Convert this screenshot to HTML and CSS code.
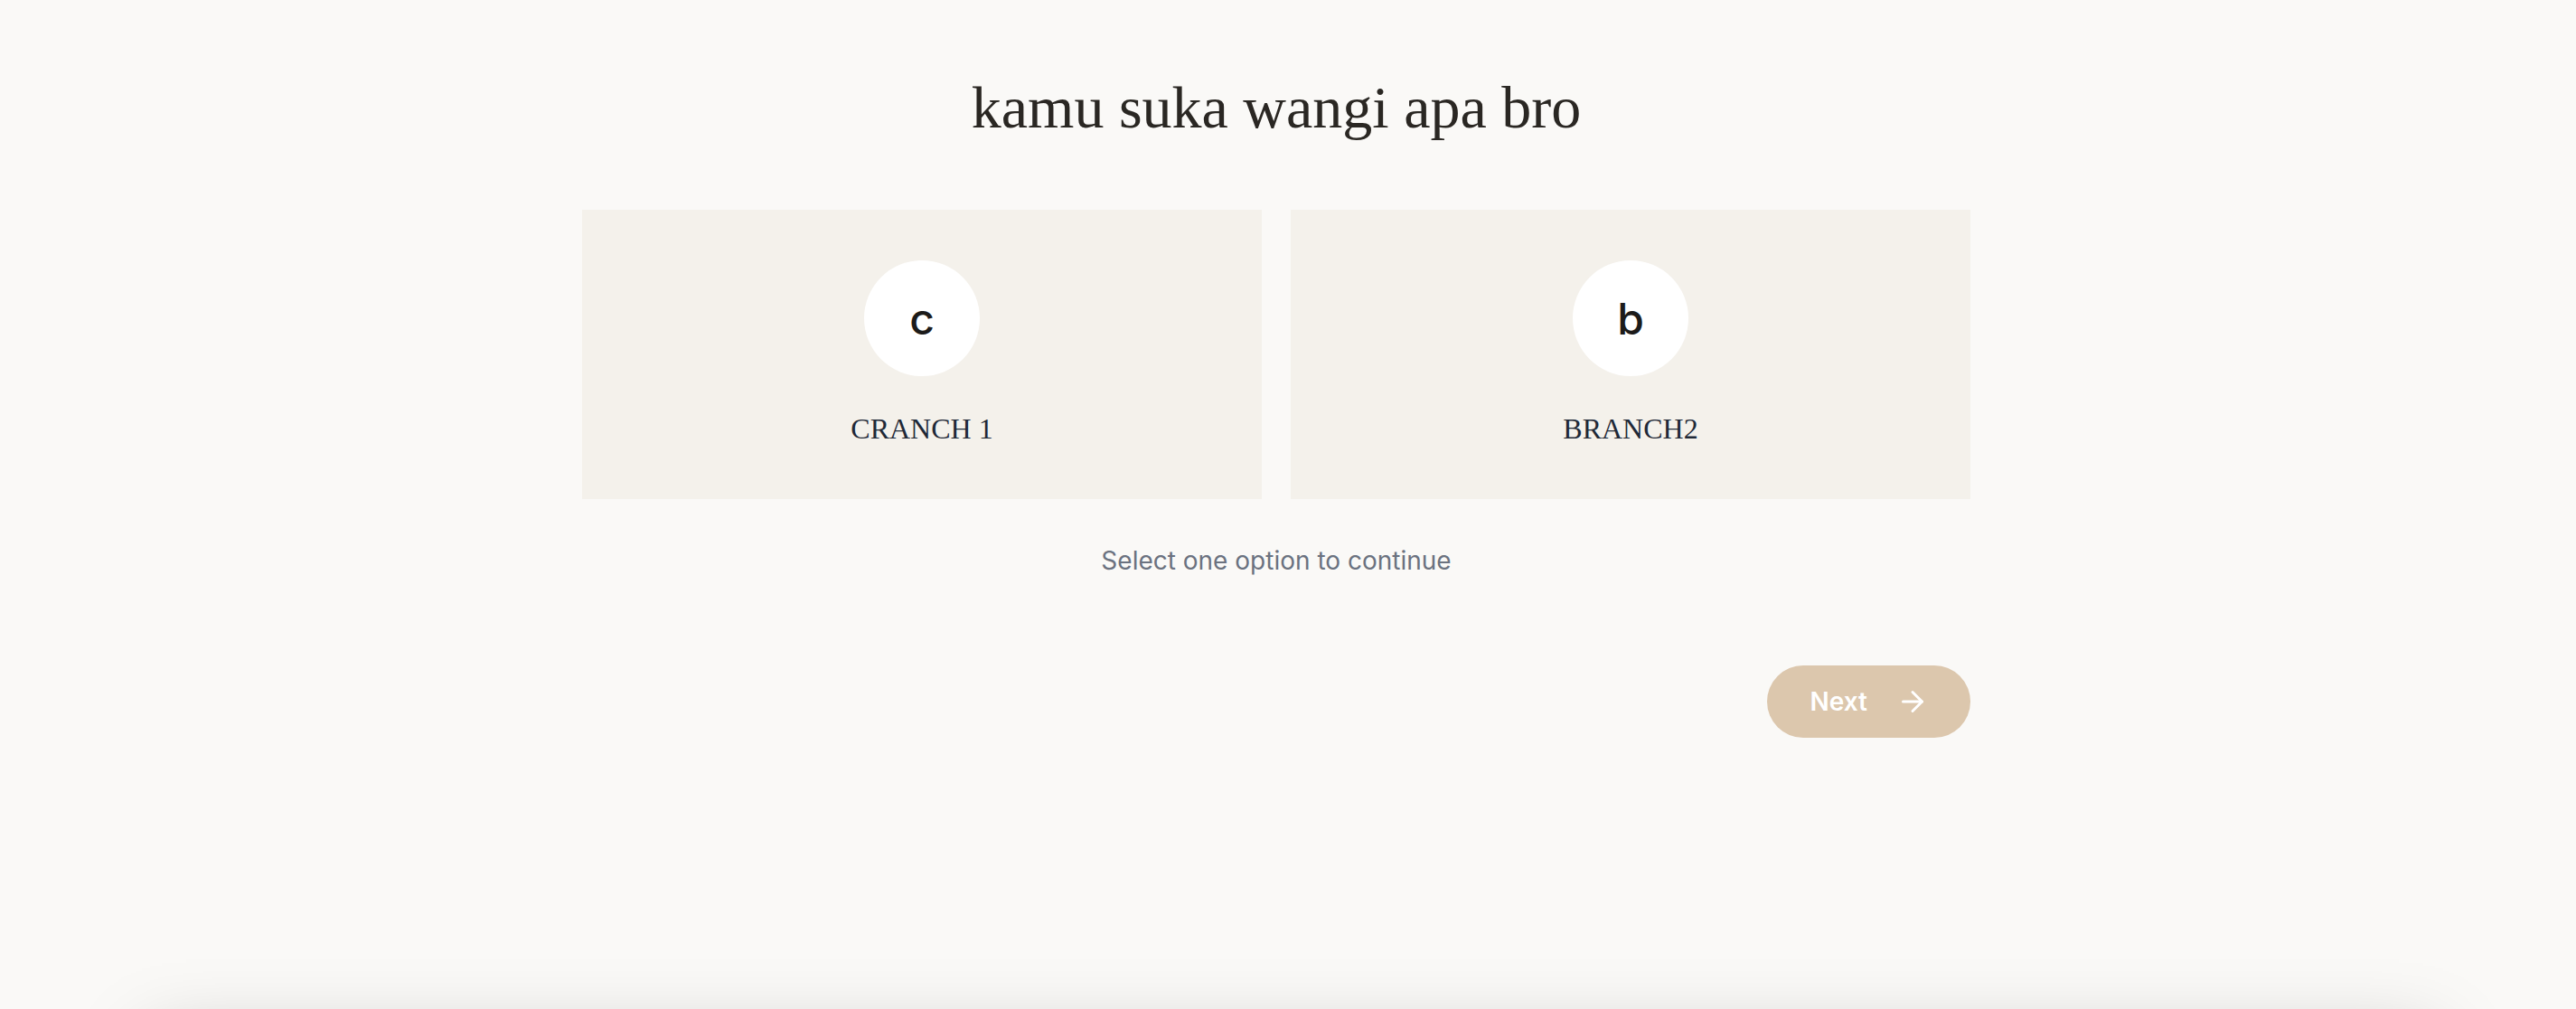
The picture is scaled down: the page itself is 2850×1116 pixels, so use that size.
FILE: index.html
```html
<!DOCTYPE html>
<html lang="en">

<head>
  <meta charset="UTF-8">
  <meta name="viewport" content="width=device-width, initial-scale=1.0">
  <title>Quiz</title>
  <link rel="stylesheet" href="styles.css">
</head>

<body>
  <div class="page">
    <main class="quiz">
      <h1 class="question">kamu suka wangi apa bro</h1>

      <div class="options">
        <button class="option">
          <span class="badge">c</span>
          <span class="option-label">CRANCH 1</span>
        </button>
        <button class="option">
          <span class="badge">b</span>
          <span class="option-label">BRANCH2</span>
        </button>
      </div>

      <p class="hint">Select one option to continue</p>

      <div class="actions">
        <button class="next">
          Next
          <svg viewBox="0 0 24 24" width="36" height="36" fill="none" stroke="currentColor" stroke-width="2" stroke-linecap="round" stroke-linejoin="round">
            <path d="M5 12h14"></path>
            <path d="M12 5l7 7-7 7"></path>
          </svg>
        </button>
      </div>
    </main>
  </div>

  <div class="sheet"></div>
</body>
</html>
```

FILE: styles.css
```css
html {
  overflow: hidden;
}

body {
  margin: 0;
  padding: 0;
  background-color: #faf9f7;
  font-family: 'Inter', 'Noto Sans', sans-serif;
  color: #2a2723;
}

.page {
  padding-right: 26px;
}

.quiz {
  max-width: 1536px;
  margin: 0 auto;
  padding-top: 83px;
}

.question {
  font-family: 'Liberation Serif', serif;
  font-weight: 400;
  font-size: 66px;
  line-height: 72px;
  text-align: center;
  margin: 0 0 77px 0;
  color: #2a2723;
}

.options {
  display: grid;
  grid-template-columns: 1fr 1fr;
  gap: 32px;
}

.option {
  display: flex;
  flex-direction: column;
  align-items: center;
  height: 320px;
  padding: 56px 0 0 0;
  border: none;
  background-color: #f4f1eb;
  cursor: pointer;
  box-sizing: border-box;
}

.badge {
  width: 128px;
  height: 128px;
  border-radius: 50%;
  background-color: #ffffff;
  display: flex;
  align-items: center;
  justify-content: center;
  font-family: 'Inter', sans-serif;
  font-weight: 500;
  font-size: 48px;
  color: #1c1b1a;
}

.option-label {
  margin-top: 34px;
  font-family: 'Liberation Serif', serif;
  font-size: 32px;
  line-height: 48px;
  color: #1f2937;
}

.hint {
  margin: 48px 0 0 0;
  text-align: center;
  font-size: 28px;
  line-height: 40px;
  color: #6b7280;
}

.actions {
  display: flex;
  justify-content: flex-end;
  margin-top: 96px;
}

.next {
  display: flex;
  align-items: center;
  gap: 32px;
  height: 80px;
  padding: 0 46px 0 48px;
  border: none;
  border-radius: 40px;
  background-color: #dcc7ad;
  color: #ffffff;
  font-family: 'Inter', sans-serif;
  font-weight: 600;
  font-size: 28px;
  cursor: pointer;
}

.sheet {
  margin: 300px 140px 0 150px;
  height: 400px;
  background-color: #faf9f7;
  box-shadow: 0 20px 80px -16px rgba(0, 0, 0, 0.25);
}
```
